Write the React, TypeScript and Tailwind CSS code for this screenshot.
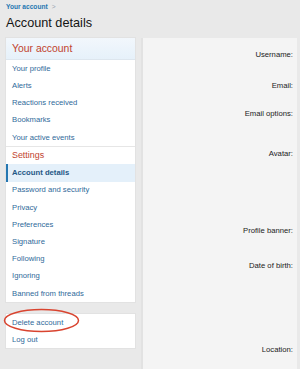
import React from "react";

// ── data ──────────────────────────────────────────────────────────
const ACCOUNT_LINKS = ["Your profile", "Alerts", "Reactions received", "Bookmarks", "Your active events"];

const SETTINGS_LINKS = [
  "Account details",
  "Password and security",
  "Privacy",
  "Preferences",
  "Signature",
  "Following",
  "Ignoring",
  "Banned from threads",
];

// label + row height (px) for the form column
const FIELDS: { label: string; h: string }[] = [
  { label: "Username:", h: "h-[31px]" },
  { label: "Email:", h: "h-[28px]" },
  { label: "Email options:", h: "h-[40px]" },
  { label: "Avatar:", h: "h-[77px]" },
  { label: "Profile banner:", h: "h-[35px]" },
  { label: "Date of birth:", h: "h-[84px]" },
  { label: "Location:", h: "h-[30px]" },
];

const FONT = { fontFamily: '"Liberation Sans", Arial, sans-serif' };

export default function App() {
  return (
    <div className="flex h-[369px] w-[300px] flex-col overflow-hidden bg-[#e9e9e9]" style={FONT}>
      {/* breadcrumb + title */}
      <div className="px-[6px]">
        <div className="flex h-[14px] items-center gap-[4px] text-[6.6px]">
          <span className="font-bold text-[#2577b1]">Your account</span>
          <span className="text-[#9aa5b1]">&gt;</span>
        </div>
        <h1 className="h-[19px] text-[12.7px] leading-[19px] text-[#141414]">Account details</h1>
      </div>

      <div className="mt-[5px] flex flex-1 gap-[6px] pl-[6px] pr-[3px]">
        {/* sidebar */}
        <div className="relative flex w-[129px] shrink-0 flex-col">
          <div className="bg-white shadow-[0_0_0_1px_#e2e2e2]">
            <div className="flex h-[22px] items-center border-b border-[#dde6ee] bg-gradient-to-b from-[#f2f7fc] to-[#e6f1fa] px-[6px] text-[10.4px] text-[#c1432e]">
              Your account
            </div>
            {ACCOUNT_LINKS.map((l) => (
              <NavItem key={l}>{l}</NavItem>
            ))}
            <div className="flex h-[18.5px] items-center border-t border-[#e6e6e6] px-[6px] text-[8.9px] text-[#c1432e]">
              Settings
            </div>
            {SETTINGS_LINKS.map((l) => (
              <NavItem key={l} active={l === "Account details"}>
                {l}
              </NavItem>
            ))}
          </div>

          <div className="mt-[12px] bg-white shadow-[0_0_0_1px_#e2e2e2]">
            <NavItem>Delete account</NavItem>
            <NavItem>Log out</NavItem>
          </div>

          {/* red annotation round "Delete account" */}
          <svg
            className="absolute left-[-3px] top-[270px] h-[25px] w-[77px]"
            viewBox="0 0 77 25"
            fill="none"
          >
            <ellipse cx="38.5" cy="12.5" rx="37" ry="11" stroke="#d9442f" strokeWidth="1.5" />
          </svg>
        </div>

        {/* form labels */}
        <div className="flex-1 border-l-2 border-[#e2e2e2] bg-[#f4f4f4] pr-[4px] pt-[12px]">
          {FIELDS.map((f) => (
            <div key={f.label} className={`${f.h} text-right text-[7.7px] leading-[10px] text-[#222]`}>
              {f.label}
            </div>
          ))}
        </div>
      </div>
    </div>
  );
}

function NavItem({ children, active }: { children: React.ReactNode; active?: boolean }) {
  return (
    <div
      className={`flex h-[17.2px] items-center text-[7.7px] ${
        active
          ? "border-l-2 border-[#2577b1] bg-[#e4f0fa] pl-[4px] font-bold text-[#1f5785]"
          : "pl-[6px] text-[#2f6a9a]"
      }`}
    >
      {children}
    </div>
  );
}
